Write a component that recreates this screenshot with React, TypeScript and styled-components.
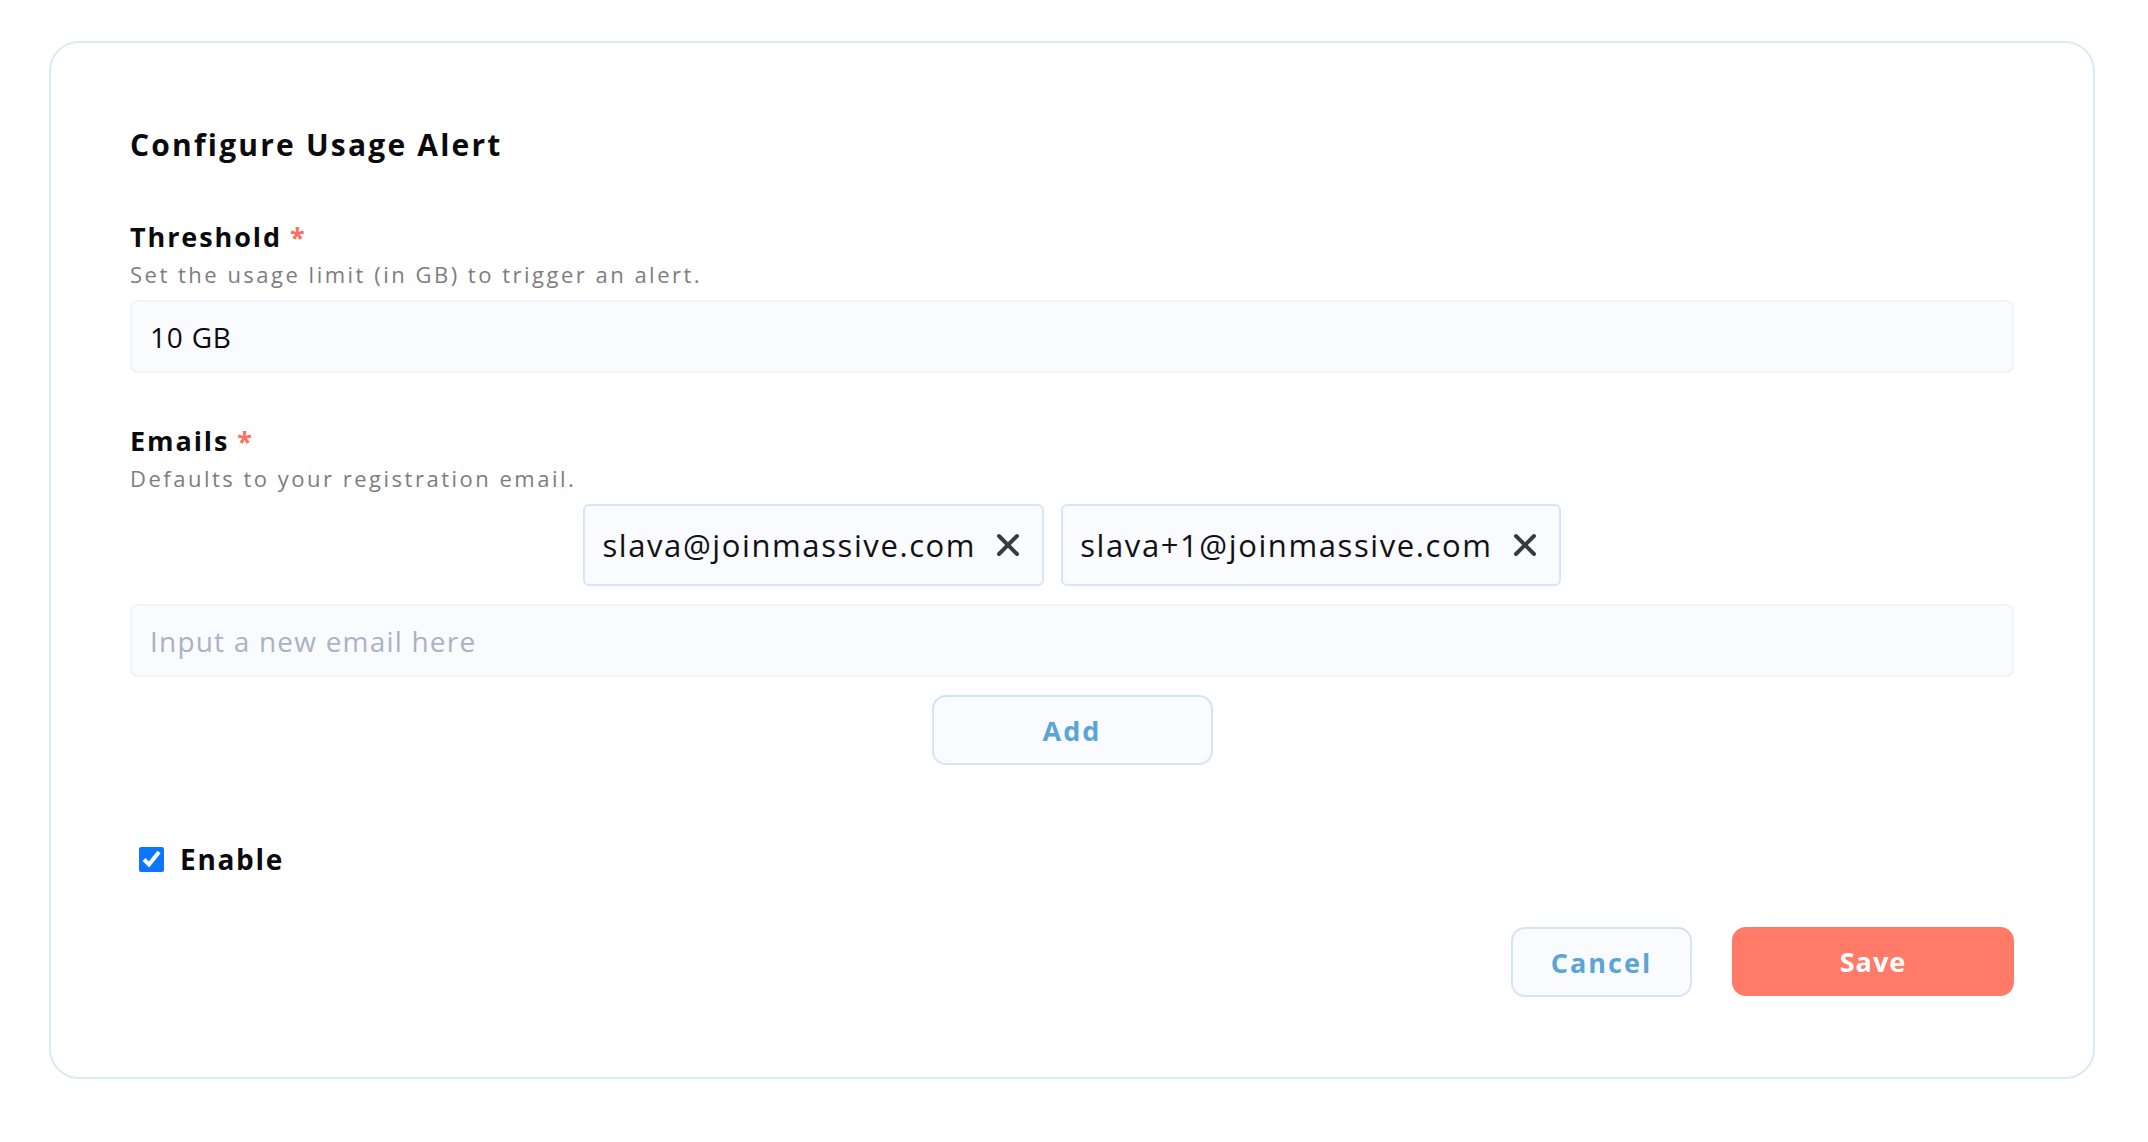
import React, { useState } from "react";
import styled, { createGlobalStyle } from "styled-components";
import { X } from "lucide-react";

const GlobalStyle = createGlobalStyle`
  html, body {
    margin: 0;
    padding: 0;
    background: #ffffff;
  }
  body {
    font-family: "Open Sans", "Noto Sans", "Liberation Sans", sans-serif;
    color: #0b0b0d;
  }
  * {
    box-sizing: border-box;
  }
`;

const Page = styled.div`
  padding: 41px 53px 64px 49px;
`;

const Card = styled.div`
  width: 2046px;
  border: 2px solid #dbe8f7;
  border-radius: 30px;
  padding: 84px 79px 80px 79px;
  display: flex;
  flex-direction: column;
`;

const Title = styled.h2`
  margin: 0 0 58px 0;
  font-size: 30px;
  line-height: 36px;
  font-weight: 700;
  letter-spacing: 2.2px;
`;

const Field = styled.div`
  display: flex;
  flex-direction: column;
`;

const Label = styled.div`
  font-size: 27px;
  line-height: 32px;
  font-weight: 700;
  letter-spacing: 1.9px;
`;

const Required = styled.span`
  color: #ff6f5c;
  margin-left: 8px;
`;

const Hint = styled.div`
  margin-top: 8px;
  font-size: 22px;
  line-height: 26px;
  color: #7d7d80;
  letter-spacing: 2.5px;
`;

const Input = styled.input<{ $top: number }>`
  margin-top: ${(p) => p.$top}px;
  width: 100%;
  height: 73px;
  padding: 0 18px;
  background: #f9fbfe;
  border: 2px solid #eff3fa;
  border-radius: 8px;
  font-family: inherit;
  font-size: 28px;
  letter-spacing: 0.8px;
  color: #0b0b0d;
  outline: none;

  &::placeholder {
    color: #a9b3c3;
    letter-spacing: 1.2px;
  }
`;

const EmailsField = styled(Field)`
  margin-top: 52px;
`;

const ChipRow = styled.div`
  margin-top: 13px;
  display: flex;
  justify-content: center;
  gap: 17px;
`;

const Chip = styled.div`
  height: 82px;
  display: flex;
  align-items: center;
  gap: 14px;
  padding: 0 16px 0 17px;
  background: #f9fbfe;
  border: 2px solid #d6e6f8;
  border-radius: 6px;
  font-size: 31px;
  letter-spacing: 1.6px;
  color: #111114;
`;

const RemoveButton = styled.button`
  display: flex;
  align-items: center;
  justify-content: center;
  padding: 0;
  border: none;
  background: transparent;
  color: #3b3b3e;
  cursor: pointer;
`;

const OutlineButton = styled.button<{ $width: number }>`
  width: ${(p) => p.$width}px;
  height: 70px;
  background: #f9fbfe;
  border: 2px solid #d4e4f7;
  border-radius: 14px;
  font-family: inherit;
  font-size: 27px;
  font-weight: 700;
  letter-spacing: 2px;
  color: #5aa5d5;
  cursor: pointer;
`;

const AddRow = styled.div`
  margin-top: 18px;
  display: flex;
  justify-content: center;
`;

const CheckRow = styled.label`
  margin-top: 78px;
  margin-left: 9px;
  display: flex;
  align-items: center;
  gap: 16px;
  font-size: 28px;
  line-height: 32px;
  font-weight: 700;
  letter-spacing: 1.7px;
  cursor: pointer;
`;

const Check = styled.input`
  margin: 0;
  width: 25px;
  height: 25px;
  accent-color: #0d76ff;
`;

const Actions = styled.div`
  margin-top: 52px;
  display: flex;
  justify-content: flex-end;
  gap: 40px;
`;

const SaveButton = styled.button`
  width: 282px;
  height: 69px;
  border: none;
  border-radius: 14px;
  background: #ff7b67;
  font-family: inherit;
  font-size: 27px;
  font-weight: 700;
  letter-spacing: 1px;
  color: #ffffff;
  cursor: pointer;
`;

const App: React.FC = () => {
  const [threshold, setThreshold] = useState("10 GB");
  const [emails, setEmails] = useState<string[]>([
    "slava@joinmassive.com",
    "slava+1@joinmassive.com",
  ]);
  const [newEmail, setNewEmail] = useState("");
  const [enabled, setEnabled] = useState(true);

  const addEmail = () => {
    if (!newEmail.trim()) return;
    setEmails([...emails, newEmail.trim()]);
    setNewEmail("");
  };

  return (
    <Page>
      <GlobalStyle />
      <Card>
        <Title>Configure Usage Alert</Title>

        <Field>
          <Label>
            Threshold<Required>*</Required>
          </Label>
          <Hint>Set the usage limit (in GB) to trigger an alert.</Hint>
          <Input
            $top={13}
            value={threshold}
            onChange={(e) => setThreshold(e.target.value)}
          />
        </Field>

        <EmailsField>
          <Label>
            Emails<Required>*</Required>
          </Label>
          <Hint>Defaults to your registration email.</Hint>
          <ChipRow>
            {emails.map((email) => (
              <Chip key={email}>
                {email}
                <RemoveButton
                  onClick={() => setEmails(emails.filter((e) => e !== email))}
                >
                  <X size={36} strokeWidth={2.6} />
                </RemoveButton>
              </Chip>
            ))}
          </ChipRow>
          <Input
            $top={18}
            placeholder="Input a new email here"
            value={newEmail}
            onChange={(e) => setNewEmail(e.target.value)}
          />
          <AddRow>
            <OutlineButton $width={281} onClick={addEmail}>
              Add
            </OutlineButton>
          </AddRow>
        </EmailsField>

        <CheckRow>
          <Check
            type="checkbox"
            checked={enabled}
            onChange={(e) => setEnabled(e.target.checked)}
          />
          Enable
        </CheckRow>

        <Actions>
          <OutlineButton $width={181}>Cancel</OutlineButton>
          <SaveButton>Save</SaveButton>
        </Actions>
      </Card>
    </Page>
  );
};

export default App;
